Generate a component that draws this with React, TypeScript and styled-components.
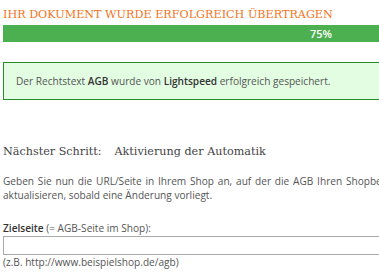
import React from "react";
import styled, { createGlobalStyle } from "styled-components";

const Global = createGlobalStyle`
  html, body { margin: 0; padding: 0; overflow: hidden; background: #fff; }
  body { font-family: "Open Sans", "Noto Sans", sans-serif; color: #555; }
`;

const Page = styled.div`
  width: 848px;
  padding: 3px;
  display: flex;
  flex-direction: column;
`;

const Title = styled.h1`
  margin: 0;
  padding-top: 4px;
  font-family: "DejaVu Serif", serif;
  font-weight: normal;
  font-size: 11.2px;
  line-height: 16px;
  color: #f37421;
`;

const Track = styled.div`
  margin-top: 2px;
  height: 17px;
  background: #fff;
  display: flex;
`;

const Fill = styled.div`
  height: 100%;
  background: #4caf50;
  color: #fff;
  font-size: 11px;
  font-weight: 600;
  line-height: 17px;
  text-align: center;
`;

const Alert = styled.div`
  margin-top: 20px;
  border: 1px solid #2a8a2a;
  background: #e2fde2;
  padding: 0 12px;
  height: 36px;
  display: flex;
  align-items: center;
  font-size: 10.1px;
  color: #555;
  b { color: #333; font-weight: 600; }
`;

const StepTitle = styled.h2`
  margin: 44px 0 0;
  font-family: "DejaVu Serif", serif;
  font-weight: normal;
  font-size: 11.2px;
  line-height: 16px;
  color: #444;
  display: flex;
  gap: 13px;
`;

const Text = styled.p`
  margin: 14px 0 0;
  font-size: 10.1px;
  line-height: 14px;
  color: #555;
`;

const JustifiedLine = styled.span`
  display: block;
  text-align: justify;
  text-align-last: justify;
`;

const Label = styled.label`
  display: block;
  margin-top: 19px;
  font-size: 10.1px;
  line-height: 14px;
  color: #555;
  b { color: #333; font-weight: 600; }
`;

const Input = styled.input`
  display: block;
  box-sizing: border-box;
  margin: 1px 0 0;
  width: 100%;
  height: 19px;
  border: 1px solid #aaa;
  background: #fff;
`;

const Hint = styled.div`
  margin-top: 0;
  font-size: 10.1px;
  line-height: 14px;
  color: #555;
`;

export default function App() {
  const progress = 75;
  return (
    <>
      <Global />
      <Page>
        <Title>IHR DOKUMENT WURDE ERFOLGREICH ÜBERTRAGEN</Title>
        <Track>
          <Fill style={{ width: `${progress}%` }}>{progress}%</Fill>
        </Track>
        <Alert>
          <span>
            Der Rechtstext <b>AGB</b> wurde von <b>Lightspeed</b> erfolgreich gespeichert.
          </span>
        </Alert>
        <StepTitle>
          <span>Nächster Schritt:</span>
          <span>Aktivierung der Automatik</span>
        </StepTitle>
        <Text>
          <JustifiedLine>
            Geben Sie nun die URL/Seite in Ihrem Shop an, auf der die AGB Ihren Shopbesuchern angezeigt werden sollen. Wir werden die Seite dann regelmäßig und automatisch für Sie
          </JustifiedLine>
          aktualisieren, sobald eine Änderung vorliegt.
        </Text>
        <Label>
          <b>Zielseite</b> (= AGB-Seite im Shop):
        </Label>
        <Input type="text" />
        <Hint>(z.B. http://www.beispielshop.de/agb)</Hint>
      </Page>
    </>
  );
}
